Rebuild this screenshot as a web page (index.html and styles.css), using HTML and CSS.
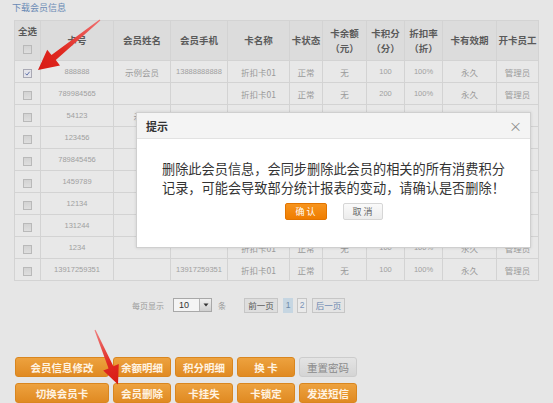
FILE: index.html
```html
<!DOCTYPE html>
<html lang="zh-CN">
<head>
<meta charset="utf-8">
<title>会员列表</title>
<link rel="stylesheet" href="styles.css">
</head>
<body>
<div class="page">
  <a class="download" href="#">下载会员信息</a>

  <table class="grid">
    <colgroup>
      <col class="c-chk"><col class="c-no"><col class="c-name"><col class="c-phone"><col class="c-card">
      <col class="c-state"><col class="c-bal"><col class="c-pts"><col class="c-rate"><col class="c-valid"><col class="c-staff">
    </colgroup>
    <thead>
      <tr>
        <th><div class="all">全选</div><span class="cb"></span></th>
        <th>卡号</th>
        <th>会员姓名</th>
        <th>会员手机</th>
        <th>卡名称</th>
        <th>卡状态</th>
        <th>卡余额<br>（元）</th>
        <th>卡积分<br>（分）</th>
        <th>折扣率<br>（折）</th>
        <th>卡有效期</th>
        <th>开卡员工</th>
      </tr>
    </thead>
    <tbody>
      <tr><td><span class="cb checked"><svg viewBox="0 0 10 10"><path d="M2 5 L4.2 7.3 L8 2.5" fill="none" stroke="#5a6fa8" stroke-width="1.4"/></svg></span></td><td class="num">888888</td><td>示例会员</td><td class="num">13888888888</td><td>折扣卡01</td><td>正常</td><td>无</td><td class="num">100</td><td class="num">100%</td><td>永久</td><td>管理员</td></tr>
      <tr><td><span class="cb"></span></td><td class="num">789984565</td><td></td><td></td><td>折扣卡01</td><td>正常</td><td>无</td><td class="num">200</td><td class="num">100%</td><td>永久</td><td>管理员</td></tr>
      <tr><td><span class="cb"></span></td><td class="num">54123</td><td>示例</td><td></td><td>折扣卡01</td><td>正常</td><td>无</td><td class="num">100</td><td class="num">100%</td><td>永久</td><td>管理员</td></tr>
      <tr><td><span class="cb"></span></td><td class="num">123456</td><td></td><td></td><td>折扣卡01</td><td>正常</td><td>无</td><td class="num">100</td><td class="num">100%</td><td>永久</td><td>管理员</td></tr>
      <tr><td><span class="cb"></span></td><td class="num">789845456</td><td></td><td></td><td>折扣卡01</td><td>正常</td><td>无</td><td class="num">100</td><td class="num">100%</td><td>永久</td><td>管理员</td></tr>
      <tr><td><span class="cb"></span></td><td class="num">1459789</td><td></td><td></td><td>折扣卡01</td><td>正常</td><td>无</td><td class="num">100</td><td class="num">100%</td><td>永久</td><td>管理员</td></tr>
      <tr><td><span class="cb"></span></td><td class="num">12134</td><td></td><td></td><td>折扣卡01</td><td>正常</td><td>无</td><td class="num">100</td><td class="num">100%</td><td>永久</td><td>管理员</td></tr>
      <tr><td><span class="cb"></span></td><td class="num">131244</td><td></td><td></td><td>折扣卡01</td><td>正常</td><td>无</td><td class="num">100</td><td class="num">100%</td><td>永久</td><td>管理员</td></tr>
      <tr><td><span class="cb"></span></td><td class="num">1234</td><td></td><td></td><td>折扣卡01</td><td>正常</td><td>无</td><td class="num">100</td><td class="num">100%</td><td>永久</td><td>管理员</td></tr>
      <tr><td><span class="cb"></span></td><td class="num">13917259351</td><td></td><td class="num">13917259351</td><td>折扣卡01</td><td>正常</td><td>无</td><td class="num">100</td><td class="num">100%</td><td>永久</td><td>管理员</td></tr>
    </tbody>
  </table>

  <div class="pager">
    <span class="lbl">每页显示</span>
    <span class="select"><span class="sel-val">10</span><span class="sel-btn"><svg viewBox="0 0 8 8"><path d="M1.5 2.5 L6.5 2.5 L4 5.5 Z" fill="#333"/></svg></span></span>
    <span class="lbl unit">条</span>
    <span class="pbtn prev">前一页</span>
    <span class="pbtn page-cur">1</span>
    <span class="pbtn page-num">2</span>
    <span class="pbtn next">后一页</span>
  </div>

  <div class="actions">
    <div class="btn-row">
      <span class="btn wide">会员信息修改</span>
      <span class="btn">余额明细</span>
      <span class="btn">积分明细</span>
      <span class="btn">换 卡</span>
      <span class="btn grey">重置密码</span>
    </div>
    <div class="btn-row">
      <span class="btn wide">切换会员卡</span>
      <span class="btn">会员删除</span>
      <span class="btn">卡挂失</span>
      <span class="btn">卡锁定</span>
      <span class="btn">发送短信</span>
    </div>
  </div>

  <div class="dialog">
    <div class="dialog-title"><span>提示</span><span class="close">×</span></div>
    <div class="dialog-body">删除此会员信息，会同步删除此会员的相关的所有消费积分<br>记录，可能会导致部分统计报表的变动，请确认是否删除！</div>
    <div class="dialog-actions"><span class="ok">确 认</span><span class="cancel">取 消</span></div>
  </div>

  <svg class="arrows" width="553" height="403" viewBox="0 0 553 403">
    <defs>
      <linearGradient id="ar1" x1="100" y1="20" x2="38" y2="70" gradientUnits="userSpaceOnUse">
        <stop offset="0" stop-color="#f07070"/>
        <stop offset="0.6" stop-color="#e02a22"/>
        <stop offset="1" stop-color="#d81a14"/>
      </linearGradient>
      <linearGradient id="ar2" x1="95" y1="330" x2="118" y2="384" gradientUnits="userSpaceOnUse">
        <stop offset="0" stop-color="#f08080"/>
        <stop offset="0.6" stop-color="#e02a22"/>
        <stop offset="1" stop-color="#d81a14"/>
      </linearGradient>
    </defs>
    <polygon points="100.4,20.5 55.8,59.9 60,65.4 38,70 47.2,49.8 51.5,54.9 99.6,19.5" fill="url(#ar1)"/>
    <polygon points="95.5,329.8 113.4,366.3 118.8,364 118,384.5 103.2,370.6 108.6,368.5 94.5,330.2" fill="url(#ar2)"/>
  </svg>
</div>
</body>
</html>
```

FILE: styles.css
```css
* { box-sizing: border-box; }

html, body {
  margin: 0;
  padding: 0;
  background: #e6e6e6;
}

body {
  font-family: "Noto Sans CJK SC", "Liberation Sans", sans-serif;
  color: #999;
}

.page {
  position: relative;
  width: 553px;
  height: 403px;
  overflow: hidden;
}

.download {
  display: block;
  height: 20px;
  padding: 2px 0 0 12px;
  font-size: 9px;
  line-height: 12px;
  color: #6a8ab5;
  text-decoration: none;
}

.grid {
  margin-left: 14px;
  width: 524px;
  table-layout: fixed;
  border-collapse: collapse;
}

.c-chk { width: 26px; }
.c-no { width: 73px; }
.c-name { width: 57px; }
.c-phone { width: 57px; }
.c-card { width: 62px; }
.c-state { width: 33px; }
.c-bal { width: 44px; }
.c-pts { width: 38px; }
.c-rate { width: 38px; }
.c-valid { width: 54px; }
.c-staff { width: 42px; }

.grid th {
  height: 40px;
  padding: 0;
  background: #dcdcdc;
  border: 1px solid #d3d3d3;
  font-size: 9.5px;
  line-height: 15px;
  font-weight: bold;
  color: #5a5a5a;
  text-align: center;
  vertical-align: middle;
  white-space: nowrap;
}

.grid th .all {
  line-height: 12px;
  margin-bottom: 4px;
}

.grid td {
  height: 22px;
  padding: 0;
  background: #e8e8e8;
  border: 1px solid #d3d3d3;
  font-size: 8.5px;
  color: #9a9a9a;
  text-align: center;
  vertical-align: middle;
  white-space: nowrap;
  overflow: hidden;
}

.grid td.num {
  font-family: "Liberation Sans", sans-serif;
  font-size: 7.5px;
  color: #a0a0a0;
}

.cb {
  display: inline-block;
  width: 9px;
  height: 9px;
  border: 1px solid #b9b9b9;
  background: linear-gradient(#d3d3d3, #dedede);
  vertical-align: middle;
}

.cb.checked {
  background: #e4e4ea;
  border-color: #a9a9b4;
}

.cb svg {
  display: block;
  width: 7px;
  height: 7px;
}

.pager {
  display: flex;
  align-items: center;
  height: 16px;
  margin: 16px 0 0 132px;
  font-size: 8px;
}

.lbl { color: #9a9a9a; }

.select {
  display: flex;
  align-items: center;
  height: 14px;
  margin-left: 9px;
  border: 1px solid #a8a8a8;
  background: #f4f4f4;
}

.sel-val {
  width: 25px;
  padding-left: 5px;
  font-family: "Liberation Sans", sans-serif;
  font-size: 9px;
  color: #333;
}

.sel-btn {
  display: flex;
  align-items: center;
  justify-content: center;
  width: 12px;
  height: 12px;
  margin-right: 0;
  border-left: 1px solid #b5b5b5;
  background: linear-gradient(#f0f0f0, #cfcfcf);
}

.sel-btn svg { width: 8px; height: 8px; }

.unit { margin-left: 6px; }

.pbtn {
  display: inline-flex;
  align-items: center;
  justify-content: center;
  height: 15px;
  border: 1px solid #c6c6c6;
  font-size: 8.5px;
}

.prev {
  width: 34px;
  margin-left: 18px;
  background: #dedede;
  color: #555;
}

.page-cur {
  width: 10px;
  margin-left: 5px;
  background: #c6d6e2;
  border-color: #c6d6e2;
  color: #6c8aa8;
  font-family: "Liberation Sans", sans-serif;
}

.page-num {
  width: 10px;
  margin-left: 4px;
  background: #eaeaea;
  color: #7c94b8;
  font-family: "Liberation Sans", sans-serif;
}

.next {
  width: 33px;
  margin-left: 5px;
  background: #e4e4e4;
  color: #6a86b0;
}

.actions {
  display: flex;
  flex-direction: column;
  gap: 6px;
  margin: 44px 0 0 15px;
}

.btn-row {
  display: flex;
  gap: 4px;
}

.btn {
  display: flex;
  align-items: center;
  justify-content: center;
  width: 58px;
  height: 20px;
  border-radius: 3px;
  background: linear-gradient(#eda23f, #e08a22);
  border: 1px solid #d9861f;
  color: #fff3e2;
  font-size: 10.5px;
  font-weight: bold;
}

.btn.wide { width: 94px; }

.btn.grey {
  background: linear-gradient(#e4e4e4, #d4d4d4);
  border-color: #cccccc;
  color: #8a8a8a;
  font-weight: normal;
}

.dialog {
  position: absolute;
  left: 136px;
  top: 112px;
  width: 395px;
  height: 136px;
  background: #fff;
  border: 1px solid #cfcfcf;
  box-shadow: 0 0 3px rgba(0,0,0,0.12);
}

.dialog-title {
  display: flex;
  align-items: center;
  justify-content: space-between;
  height: 26px;
  padding: 0 8px 0 9px;
  background: #f4f4f4;
  border-bottom: 1px solid #e2e2e2;
  font-size: 11px;
  font-weight: bold;
  color: #333;
}

.close {
  font-weight: normal;
  font-size: 13px;
  color: #8c8c8c;
}

.dialog-body {
  padding: 20px 0 0 25px;
  font-size: 13.2px;
  line-height: 19px;
  color: #333;
  white-space: nowrap;
}

.dialog-actions {
  display: flex;
  justify-content: center;
  gap: 16px;
  margin-top: 6px;
}

.ok, .cancel {
  display: flex;
  align-items: center;
  justify-content: center;
  height: 17px;
  font-size: 9px;
  border-radius: 2px;
}

.ok {
  width: 42px;
  background: linear-gradient(#f7941e, #ef7d00);
  border: 1px solid #e27400;
  color: #fff;
}

.cancel {
  width: 40px;
  background: linear-gradient(#fafafa, #ececec);
  border: 1px solid #d6d6d6;
  color: #666;
}

.arrows {
  position: absolute;
  left: 0;
  top: 0;
  pointer-events: none;
}
```
